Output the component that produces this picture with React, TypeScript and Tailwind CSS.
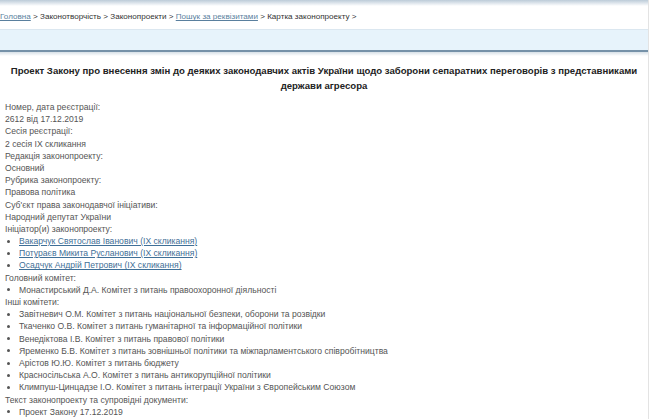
import React from "react";

const Line = ({ children }: { children: React.ReactNode }) => (
  <div className="h-[12.2px] leading-[12.2px] whitespace-nowrap shrink-0">{children}</div>
);

const Bullet = ({ children }: { children: React.ReactNode }) => (
  <div className="h-[12.2px] leading-[12.2px] whitespace-nowrap flex items-center shrink-0">
    <span className="w-[14px] pl-[2px] flex items-center">
      <span className="inline-block w-[3px] h-[3px] rounded-full bg-[#555]" />
    </span>
    <span>{children}</span>
  </div>
);

const L = ({ children }: { children: React.ReactNode }) => (
  <a href="#" className="text-[#3f6f97] underline underline-offset-1">{children}</a>
);

export default function App() {
  return (
    <div
      className="w-[650px] h-[419px] overflow-hidden bg-white flex items-start"
      style={{ fontFamily: '"Liberation Sans", Arial, sans-serif' }}
    >
      <div className="w-[649px] h-[419px] border-r border-[#e3e3e3] flex flex-col shrink-0">
        <div className="h-[6px] shrink-0 bg-gradient-to-b from-[#bccbd8] to-white" />
        <div className="h-[23px] shrink-0 flex items-center text-[8.1px] text-[#333] whitespace-nowrap">
          <a href="#" className="text-[#5a7f9e] underline underline-offset-1">Головна</a>
          <span>&nbsp;&gt; Законотворчість &gt; Законопроекти &gt;&nbsp;</span>
          <a href="#" className="text-[#5a7f9e] underline underline-offset-1">Пошук за реквізитами</a>
          <span>&nbsp;&gt; Картка законопроекту &gt;</span>
        </div>
        <div className="h-[21px] shrink-0 bg-[#e7f3fb] border-t border-[#dbe7f0]" />
        <div className="h-[2px] shrink-0 bg-[#7591a8]" />
        <div className="h-[4px] shrink-0 bg-gradient-to-b from-[#d7e0e7] to-white" />
        <div className="shrink-0 pt-[7px] text-center font-bold text-[9.6px] leading-[15px] text-[#222]">
          <div className="whitespace-nowrap">
            Проект Закону про внесення змін до деяких законодавчих актів України щодо заборони сепаратних переговорів з представниками
          </div>
          <div className="whitespace-nowrap">держави агресора</div>
        </div>
        <div className="shrink-0 pt-[8px] pl-[5px] text-[8.6px] text-[#555] flex flex-col">
          <Line>Номер, дата реєстрації:</Line>
          <Line>2612 від 17.12.2019</Line>
          <Line>Сесія реєстрації:</Line>
          <Line>2 сесія IX скликання</Line>
          <Line>Редакція законопроекту:</Line>
          <Line>Основний</Line>
          <Line>Рубрика законопроекту:</Line>
          <Line>Правова політика</Line>
          <Line>Суб'єкт права законодавчої ініціативи:</Line>
          <Line>Народний депутат України</Line>
          <Line>Ініціатор(и) законопроекту:</Line>
          <Bullet><L>Вакарчук Святослав Іванович (IX скликання)</L></Bullet>
          <Bullet><L>Потураєв Микита Русланович (IX скликання)</L></Bullet>
          <Bullet><L>Осадчук Андрій Петрович (IX скликання)</L></Bullet>
          <Line>Головний комітет:</Line>
          <Bullet>Монастирський Д.А. Комітет з питань правоохоронної діяльності</Bullet>
          <Line>Інші комітети:</Line>
          <Bullet>Завітневич О.М. Комітет з питань національної безпеки, оборони та розвідки</Bullet>
          <Bullet>Ткаченко О.В. Комітет з питань гуманітарної та інформаційної політики</Bullet>
          <Bullet>Венедіктова І.В. Комітет з питань правової політики</Bullet>
          <Bullet>Яременко Б.В. Комітет з питань зовнішньої політики та міжпарламентського співробітництва</Bullet>
          <Bullet>Арістов Ю.Ю. Комітет з питань бюджету</Bullet>
          <Bullet>Красносільська А.О. Комітет з питань антикорупційної політики</Bullet>
          <Bullet>Климпуш-Цинцадзе І.О. Комітет з питань інтеграції України з Європейським Союзом</Bullet>
          <Line>Текст законопроекту та супровідні документи:</Line>
          <Bullet>Проект Закону 17.12.2019</Bullet>
        </div>
      </div>
    </div>
  );
}
